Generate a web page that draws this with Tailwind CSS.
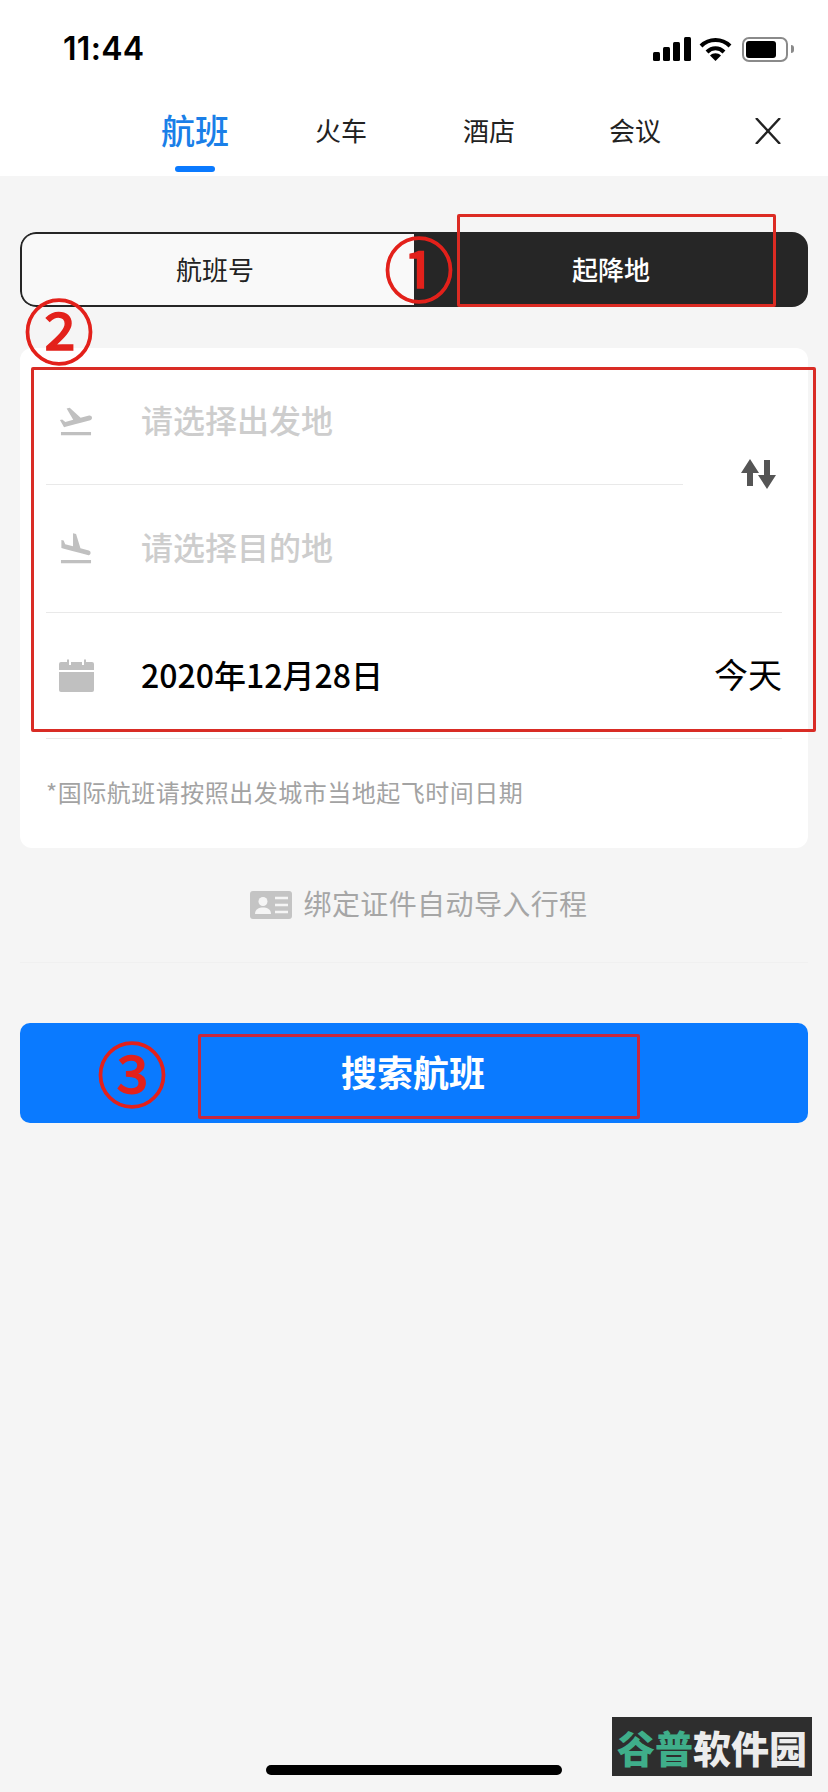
<!DOCTYPE html>
<html lang="zh">
<head>
<meta charset="utf-8">
<script src="https://cdn.jsdelivr.net/npm/@tailwindcss/browser@4"></script>
</head>
<body class="m-0">
<div class="relative w-[828px] h-[1792px] overflow-hidden bg-[#f5f5f5] font-['Noto_Sans_CJK_SC',sans-serif] text-black">

  <!-- header -->
  <header class="bg-white h-[176px] flex flex-col">
    <div class="h-[100px] flex items-start justify-between pl-[63px] pr-[34px] pt-[30px]">
      <span class="font-['Inter',sans-serif] text-[32px] leading-[38px] font-semibold tracking-[0.3px]">11:44</span>
      <div class="flex items-center gap-[8px] h-[26px] mt-[6px]">
        <svg class="w-[38px] h-[24px]" viewBox="0 0 38 24" fill="#000"><rect x="0" y="15" width="7" height="9" rx="1.5"/><rect x="10" y="10" width="7" height="14" rx="1.5"/><rect x="20" y="5" width="7" height="19" rx="1.5"/><rect x="31" y="0" width="7" height="24" rx="1.5"/></svg>
        <svg class="w-[33px] h-[24px]" viewBox="0 0 33 24" fill="none" stroke="#000" stroke-width="4"><path d="M2 9C10 1 23 1 31 9"/><path d="M8 15C13 10 20 10 25 15"/><path d="M16.500 24L11 18.500C14 15.500 19 15.500 22 18.500Z" fill="#000" stroke="none"/></svg>
        <div class="ml-[2px] flex items-center gap-[3px]">
          <div class="w-[46px] h-[25px] rounded-[7px] border-[2px] border-[#8a8a8a] p-[2px] flex">
            <div class="w-[30px] h-full rounded-[3px] bg-black"></div>
          </div>
          <div class="w-[3px] h-[8px] rounded-r-full bg-[#8a8a8a]"></div>
        </div>
      </div>
    </div>
    <nav class="relative flex-1 text-[#222] text-[26px]">
      <div class="absolute left-[161px] top-[10px] flex flex-col items-center">
        <span class="text-[34px] leading-[40px] font-medium text-[#1a7fe8]">航班</span>
        <span class="mt-[16px] w-[40px] h-[6px] rounded-full bg-[#0a7aff]"></span>
      </div>
      <span class="absolute left-[315px] top-[14px] leading-[32px]">火车</span>
      <span class="absolute left-[463px] top-[14px] leading-[32px]">酒店</span>
      <span class="absolute left-[609px] top-[14px] leading-[32px]">会议</span>
      <svg class="absolute left-[755px] top-[18px] w-[26px] h-[26px]" viewBox="0 0 26 26" stroke="#222" stroke-width="2.400" fill="none"><path d="M1 0L25 26M25 0L1 26"/></svg>
    </nav>
  </header>

  <main class="px-[20px] pt-[56px]">
    <!-- segment -->
    <div class="flex h-[75px] rounded-[16px] overflow-hidden text-[26px]">
      <div class="w-[394px] flex items-center justify-center pr-[6px] bg-[#f9f9f9] border-[2px] border-r-0 border-[#262626] rounded-l-[16px] text-[#222]"><span class="mb-[2px]">航班号</span></div>
      <div class="flex-1 flex items-center justify-center bg-[#262626] text-white font-medium"><span class="mb-[2px]">起降地</span></div>
    </div>

    <!-- card -->
    <section class="mt-[41px] h-[500px] bg-white rounded-[12px] px-[26px] pt-[10px]">
      <div class="flex">
        <div class="w-[637px]">
          <div class="h-[127px] border-b border-[#e9e9e9] flex items-center">
            <svg class="ml-[11px] w-[38px] h-[38px]" viewBox="0 0 24 24" fill="#c0c0c0"><path d="M2.500 19h19v2h-19zm19.570-9.360c-.21-.8-1.040-1.280-1.840-1.060L14.920 10l-6.900-6.430-1.930.51 4.140 7.170-4.970 1.330-1.970-1.540-1.450.39 1.820 3.160.77 1.330 1.600-.43 5.310-1.420 4.350-1.160L21 11.490c.81-.23 1.280-1.050 1.070-1.850z"/></svg>
            <span class="ml-[46px] mb-[5px] text-[32px] font-medium text-[#cdcdcd]">请选择出发地</span>
          </div>
          <div class="h-[127px] flex items-center">
            <svg class="ml-[11px] w-[38px] h-[38px]" viewBox="0 0 24 24" fill="#c0c0c0"><path d="M2.500 19h19v2h-19zm7.180-5.730l4.350 1.160 5.310 1.420c.8.21 1.620-.26 1.840-1.060.21-.8-.26-1.620-1.060-1.840l-5.310-1.420-2.760-9.020L10.120 2v8.280L5.150 8.950l-.93-2.320-1.450-.39v5.170l1.600.43 5.310 1.430z"/></svg>
            <span class="ml-[46px] mb-[5px] text-[32px] font-medium text-[#cdcdcd]">请选择目的地</span>
          </div>
        </div>
        <div class="flex-1 flex items-center justify-end pr-[5px] pb-[22px]">
          <svg class="w-[37px] h-[30px]" viewBox="0 0 37 30" fill="#555"><path d="M10 0L19 14H13V27H7V14H1Z"/><path d="M27 30L18 16H24V1H30V16H36Z"/></svg>
        </div>
      </div>
      <div class="h-[127px] border-y border-[#e9e9e9] flex items-center">
        <svg class="ml-[13px] w-[35px] h-[33px]" viewBox="0 0 35 33" fill="#c0c0c0"><path d="M2 3H8V0.500H10V6H12V3H23V6H25V0.500H27V3H33A2 2 0 0 1 35 5V11H0V5A2 2 0 0 1 2 3Z"/><path d="M0 13H35V31A2 2 0 0 1 33 33H2A2 2 0 0 1 0 31Z"/></svg>
        <span class="ml-[47px] mb-[4px] text-[32px] font-medium">2020年12月28日</span>
        <span class="ml-auto mb-[4px] text-[34px] font-normal">今天</span>
      </div>
      <p class="mt-[35px] text-[24px] leading-[36px] text-[#a3a3a3] tracking-[0.5px]">*国际航班请按照出发城市当地起飞时间日期</p>
    </section>

    <!-- bind -->
    <div class="h-[115px] border-b border-[#f0f0f0] flex items-center justify-center gap-[11px] pl-[10px]">
      <svg class="w-[42px] h-[28px]" viewBox="0 0 42 28"><rect width="42" height="28" rx="3" fill="#c4c4c4"/><circle cx="13" cy="10.500" r="4.500" fill="#f5f5f5"/><path d="M5 23C5 18 9 16.500 13 16.500S21 18 21 23Z" fill="#f5f5f5"/><path d="M25 7H38M25 14H38M25 21H38" stroke="#f5f5f5" stroke-width="2.500"/></svg>
      <span class="mb-[4px] text-[28px] leading-[36px] text-[#a6a6a6] tracking-[0.4px]">绑定证件自动导入行程</span>
    </div>

    <!-- button -->
    <button class="mt-[60px] w-full h-[100px] rounded-[10px] bg-[#0a7aff] text-white text-[36px] font-bold flex items-center justify-center pr-[2px]"><span class="mb-[5px]">搜索航班</span></button>
  </main>

  <!-- annotations over the page -->
  <div class="absolute left-[457px] top-[214px] w-[319px] h-[93px] border-[3px] border-[#dc2b23] rounded-[2px]"></div>
  <div class="absolute left-[31px] top-[367px] w-[785px] h-[365px] border-[3px] border-[#d92c25] rounded-[2px]"></div>
  <div class="absolute left-[198px] top-[1034px] w-[442px] h-[85px] border-[3px] border-[#c8283f] rounded-[2px]"></div>
  <span class="absolute left-[382px] top-[219px] w-[74px] text-center text-[70px] leading-[96px] font-normal [-webkit-text-stroke:1.5px_#e3211b] text-[#e3211b]">①</span>
  <span class="absolute left-[22px] top-[281px] w-[74px] text-center text-[70px] leading-[96px] font-normal [-webkit-text-stroke:1.5px_#e3211b] text-[#e3211b]">②</span>
  <span class="absolute left-[95px] top-[1024px] w-[74px] text-center text-[70px] leading-[96px] font-normal [-webkit-text-stroke:1.5px_#e3211b] text-[#e3211b]">③</span>

  <!-- home indicator -->
  <div class="absolute left-[266px] top-[1765px] w-[296px] h-[10px] rounded-full bg-black"></div>

  <!-- watermark -->
  <div class="absolute left-[612px] top-[1717px] w-[200px] h-[59px] bg-[#2e2e2e] flex items-center justify-center text-[38px] font-black leading-none">
    <span class="text-[#3fae8a]">谷普</span><span class="text-[#ececec]">软件园</span>
  </div>
</div>
</body>
</html>
